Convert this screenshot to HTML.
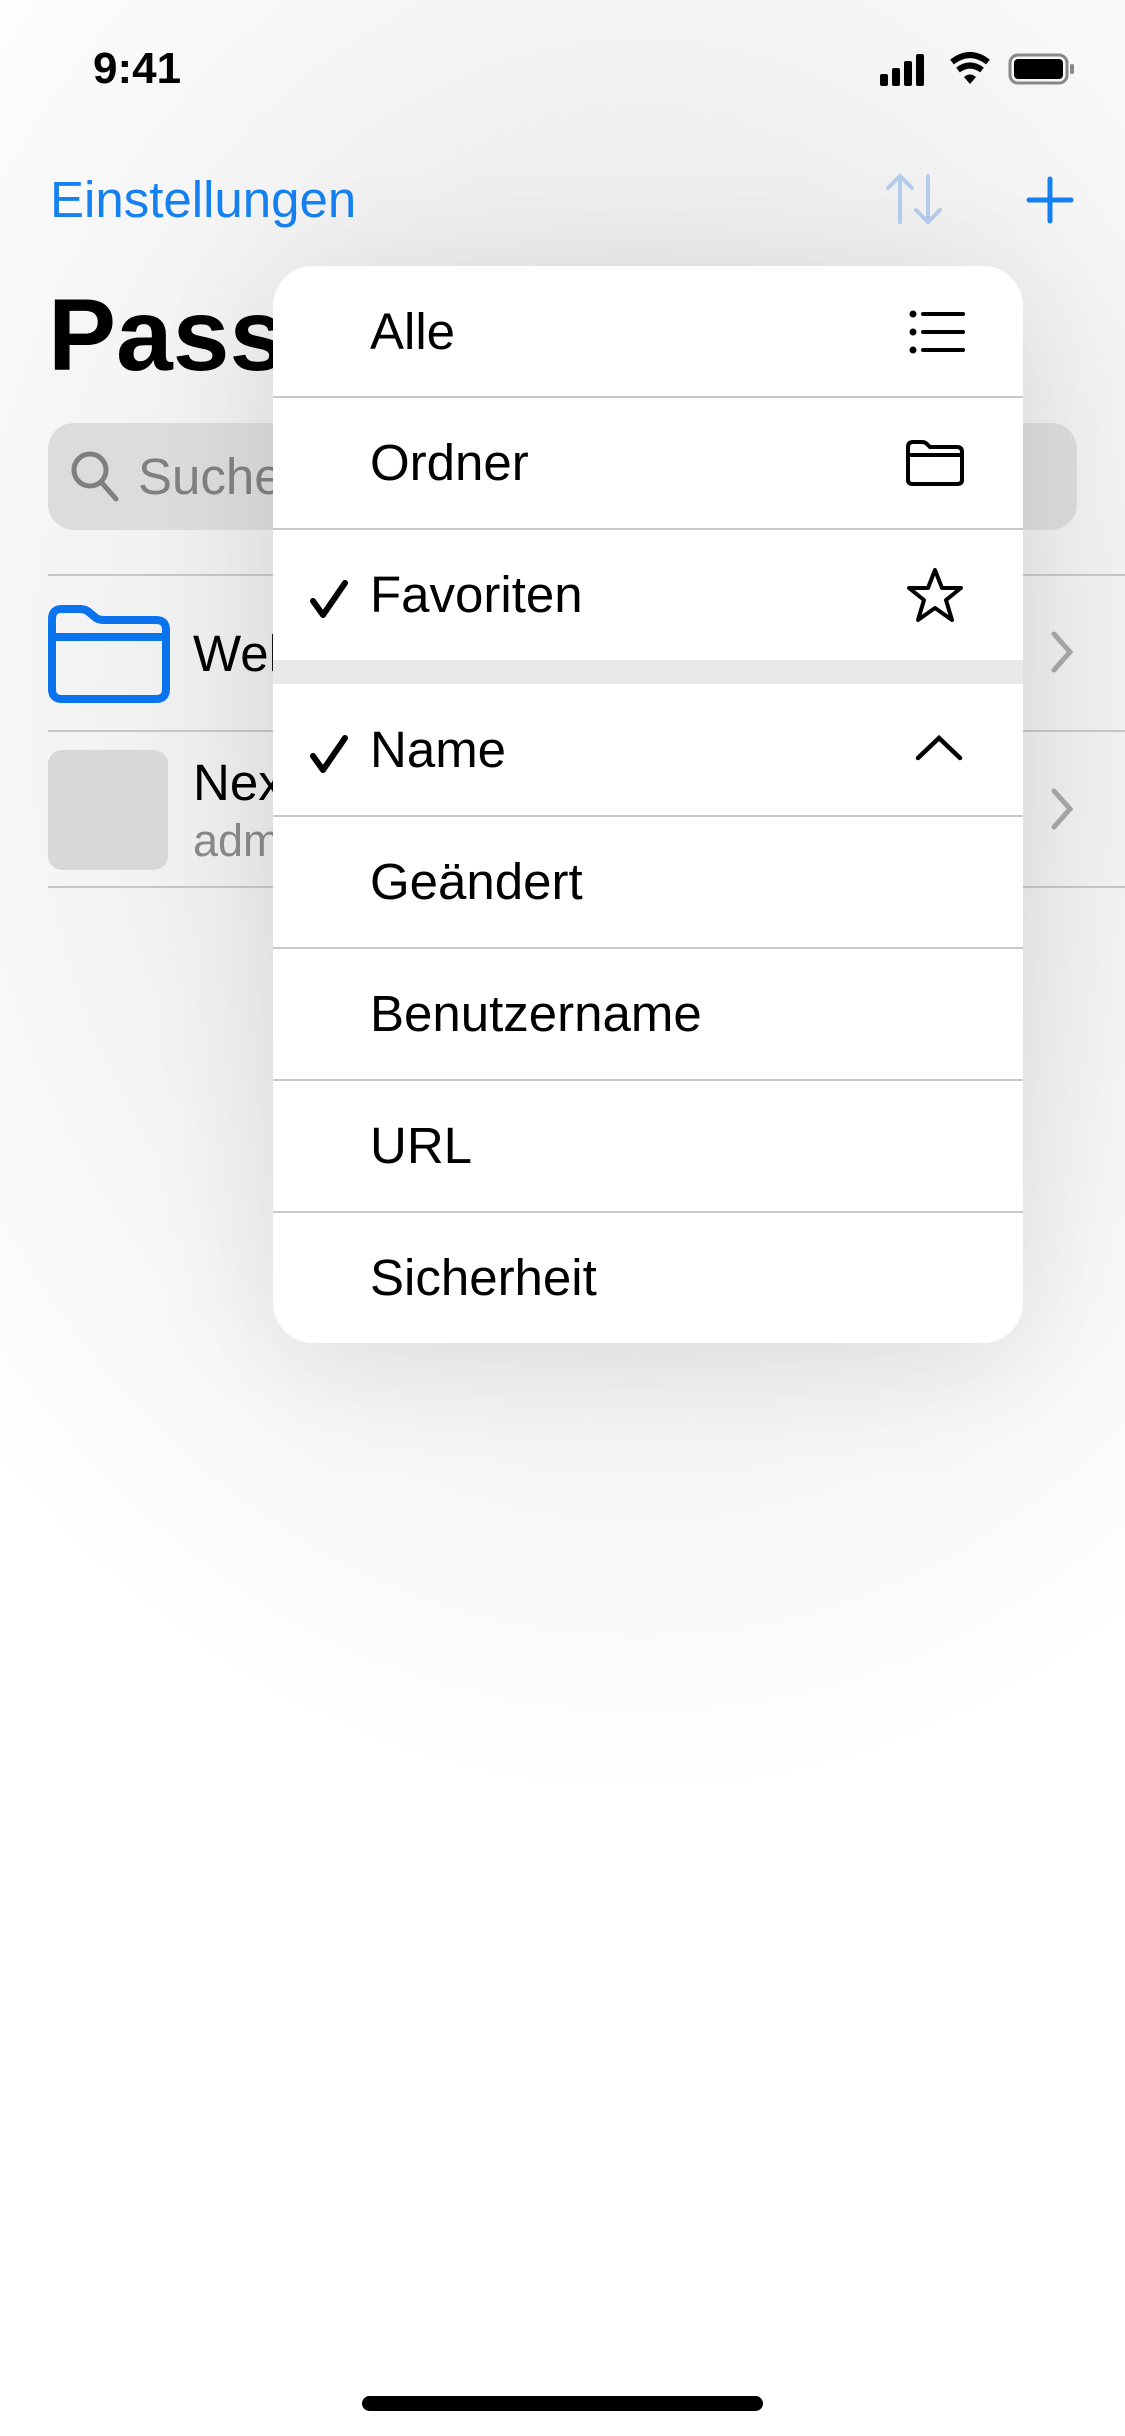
<!DOCTYPE html>
<html><head><meta charset="utf-8"><style>
*{margin:0;padding:0;box-sizing:border-box}
body{width:1125px;height:2436px;position:relative;overflow:hidden;background:#fff;font-family:"Liberation Sans",sans-serif;}
.a{position:absolute}
.bg{position:absolute;left:0;top:0;width:1125px;height:2436px;background:radial-gradient(ellipse 900px 1100px at 640px 700px,#e6e6e6 0%,#ececec 40%,#f6f6f6 70%,#fff 100%);}
.div{position:absolute;height:2px;background:#c6c6c8}
.menu{position:absolute;left:273px;top:266px;width:750px;height:1077px;border-radius:40px;overflow:hidden;background:#fff;box-shadow:0 20px 260px rgba(0,0,0,0.10)}
.row{position:absolute;left:0;width:750px;height:132px;line-height:132px;font-size:51px;color:#000;padding-left:97px}
.sep{position:absolute;left:0;width:750px;height:2px;background:#c8c8ca}
.chk{position:absolute;left:36px;top:0}
.ic{position:absolute;right:58px}
</style></head><body>
<div class="bg"></div>
<div class="a" style="left:93px;top:44px;font-size:44px;font-weight:bold;line-height:50px">9:41</div>
<svg class="a" style="left:880px;top:52px" width="200" height="34" viewBox="0 0 200 34">
<rect x="0" y="22" width="8" height="12" rx="2"/><rect x="12" y="16" width="8" height="18" rx="2"/><rect x="24" y="9" width="8" height="25" rx="2"/><rect x="36" y="2" width="8" height="32" rx="2"/>
<path d="M72 10 Q90 -4 108 10" stroke="#000" stroke-width="6" fill="none"/><path d="M78 18 Q90 9 102 18" stroke="#000" stroke-width="6" fill="none"/><path d="M84 25 L90 32 L96 25 Q90 20 84 25Z"/>
<rect x="130" y="3" width="57" height="28" rx="8" fill="none" stroke="#888" stroke-width="3"/><rect x="134" y="7" width="49" height="20" rx="4"/><rect x="190" y="12" width="4" height="10" rx="2" fill="#888"/>
</svg>
<div class="a" style="left:50px;top:170px;font-size:51px;color:#1580f0;line-height:60px">Einstellungen</div>
<svg class="a" style="left:882px;top:172px" width="64" height="54" viewBox="0 0 64 54" stroke="#b5cdec" stroke-width="4" fill="none" stroke-linecap="round"><path d="M18 50V4M6 16L18 4L30 16M46 4V50M34 38L46 50L58 38"/></svg>
<svg class="a" style="left:1026px;top:176px" width="48" height="48" viewBox="0 0 48 48" stroke="#1580f0" stroke-width="5" stroke-linecap="round"><path d="M24 3V45M3 24H45"/></svg>
<div class="a" style="left:48px;top:280px;font-size:102px;font-weight:bold;line-height:110px">Pass</div>
<div class="a" style="left:48px;top:423px;width:1029px;height:107px;border-radius:26px;background:#dcdcdc"></div>
<svg class="a" style="left:70px;top:450px" width="50" height="54" viewBox="0 0 50 54" stroke="#7f7f7f" stroke-width="5" fill="none" stroke-linecap="round"><circle cx="20" cy="20" r="16"/><path d="M32 33L46 49"/></svg>
<div class="a" style="left:138px;top:447px;font-size:51px;color:#808080;line-height:60px">Suche</div>
<div class="div" style="left:48px;top:574px;width:1077px"></div>
<div class="div" style="left:48px;top:730px;width:1077px"></div>
<div class="div" style="left:48px;top:886px;width:1077px"></div>
<svg class="a" style="left:48px;top:605px" width="122" height="98" viewBox="0 0 122 98" stroke="#0a74ee" stroke-width="8" fill="none"><path d="M4 14Q4 4 14 4H32Q38 4 42 8L48 13Q51 15 56 15H108Q118 15 118 25V84Q118 94 108 94H14Q4 94 4 84Z"/><path d="M4 32H118"/></svg>
<div class="a" style="left:193px;top:624px;font-size:51px;line-height:60px">Wel</div>
<div class="a" style="left:48px;top:750px;width:120px;height:120px;border-radius:14px;background:#d8d8d8"></div>
<div class="a" style="left:193px;top:753px;font-size:51px;line-height:60px">Nex</div>
<div class="a" style="left:193px;top:813px;font-size:45px;line-height:56px;color:#8a8a8a">adm</div>
<svg class="a" style="left:1050px;top:630px" width="24" height="44" viewBox="0 0 24 44" stroke="#a8a8a8" stroke-width="5" fill="none" stroke-linecap="round"><path d="M4 4L20 22L4 40"/></svg>
<svg class="a" style="left:1050px;top:787px" width="24" height="44" viewBox="0 0 24 44" stroke="#a8a8a8" stroke-width="5" fill="none" stroke-linecap="round"><path d="M4 4L20 22L4 40"/></svg>

<div class="menu">
 <div class="row" style="top:0">Alle
  <svg class="ic" style="top:44px" width="56" height="44" viewBox="0 0 56 44"><g fill="#000"><circle cx="4" cy="4" r="3.5"/><circle cx="4" cy="22" r="3.5"/><circle cx="4" cy="40" r="3.5"/></g><path d="M14 4H54M14 22H54M14 40H54" stroke="#000" stroke-width="4" stroke-linecap="round"/></svg></div>
 <div class="sep" style="top:130px"></div>
 <div class="row" style="top:131px">Ordner
  <svg class="ic" style="top:42px" width="60" height="48" viewBox="0 0 60 48" stroke="#000" stroke-width="4" fill="none"><path d="M3 8Q3 3 8 3H17Q20 3 22 5L25 8H52Q57 8 57 13V41Q57 45 52 45H8Q3 45 3 41Z"/><path d="M3 16H57"/></svg></div>
 <div class="sep" style="top:262px"></div>
 <div class="row" style="top:263px"><span class="chk"><svg width="40" height="40" viewBox="0 0 40 40" stroke="#000" stroke-width="6" fill="none" stroke-linecap="round" stroke-linejoin="round" style="vertical-align:middle"><path d="M4 22L14 36L36 4"/></svg></span>Favoriten
  <svg class="ic" style="top:38px" width="60" height="56" viewBox="0 0 60 56" stroke="#000" stroke-width="4" fill="none" stroke-linejoin="round"><path d="M30 3L37 21H56L41 33L47 53L30 41L13 53L19 33L4 21H23Z"/></svg></div>
 <div class="a" style="left:0;top:394px;width:750px;height:24px;background:#e8e8e8"></div>
 <div class="row" style="top:418px"><span class="chk"><svg width="40" height="40" viewBox="0 0 40 40" stroke="#000" stroke-width="6" fill="none" stroke-linecap="round" stroke-linejoin="round" style="vertical-align:middle"><path d="M4 22L14 36L36 4"/></svg></span>Name
  <svg class="ic" style="top:50px;right:60px" width="48" height="28" viewBox="0 0 48 28" stroke="#000" stroke-width="4.5" fill="none" stroke-linecap="round"><path d="M3 24L24 4L45 24"/></svg></div>
 <div class="sep" style="top:549px"></div>
 <div class="row" style="top:550px">Geändert</div>
 <div class="sep" style="top:681px"></div>
 <div class="row" style="top:682px">Benutzername</div>
 <div class="sep" style="top:813px"></div>
 <div class="row" style="top:814px">URL</div>
 <div class="sep" style="top:945px"></div>
 <div class="row" style="top:946px">Sicherheit</div>
</div>
<div class="a" style="left:362px;top:2396px;width:401px;height:15px;border-radius:8px;background:#000"></div>
</body></html>
